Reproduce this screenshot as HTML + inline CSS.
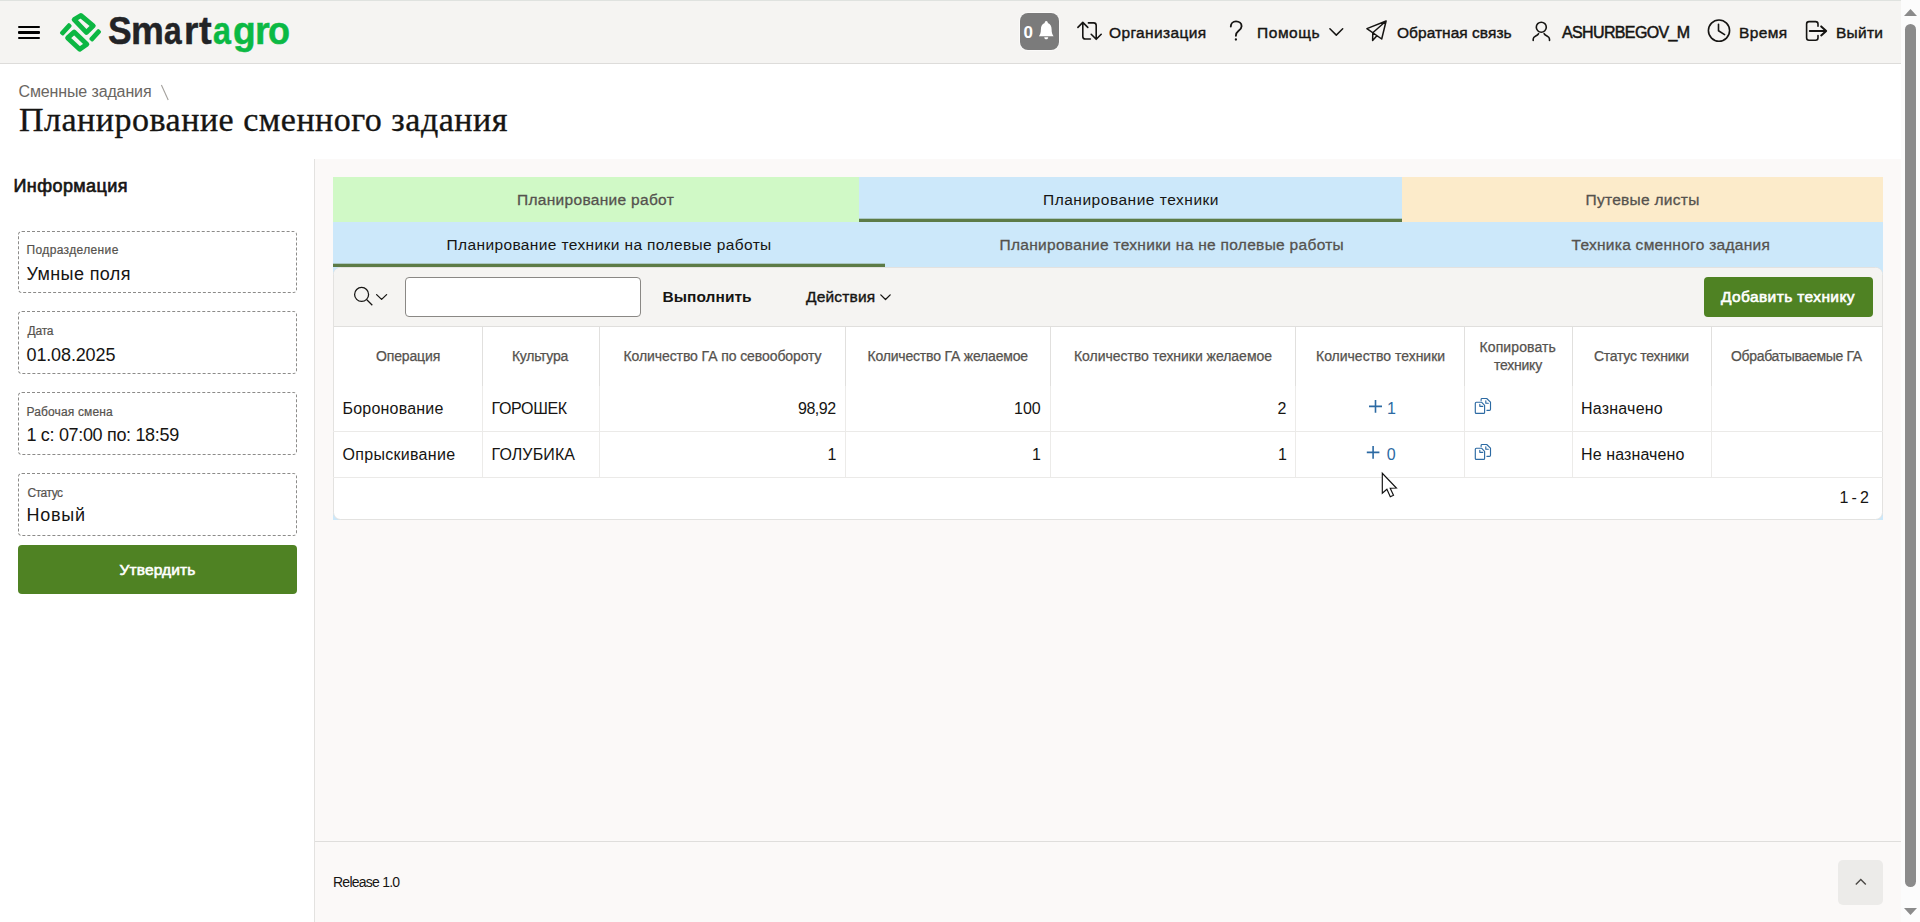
<!DOCTYPE html>
<html lang="ru">
<head>
<meta charset="utf-8">
<title>Планирование сменного задания</title>
<style>
*{box-sizing:border-box;margin:0;padding:0}
html,body{width:1920px;height:922px;overflow:hidden;background:#fff}
body{font-family:"Liberation Sans",sans-serif;color:#161513;font-size:16px;position:relative}
.abs{position:absolute}
.t{position:absolute;white-space:nowrap;line-height:1;color:#161513}
#topline{left:0;top:0;width:1920px;height:1px;background:#dfe2df}
#hdr{left:0;top:1px;width:1901px;height:62px;background:#f5f4f2}
#hdrline{left:0;top:63px;width:1901px;height:1px;background:#dddcda}
.bar{position:absolute;left:18px;width:22px;height:2px;background:#000;border-radius:1px}
.nav{color:#161513;-webkit-text-stroke:0.4px #161513}
#badge{left:1020px;top:13px;width:39px;height:37px;border-radius:8px;background:#7b7b7b;box-shadow:0 0 0 1px rgba(255,255,255,.55)}
#sb{left:1901px;top:0;width:19px;height:922px;background:#fcfcfc}
#sbthumb{left:1905px;top:24px;width:11px;height:863px;background:#8b8b8b;border-radius:6px}
#sideline{left:314px;top:159px;width:1px;height:763px;background:#e3e2e0}
.fld{position:absolute;left:18px;width:279px;height:62px;border:1px dashed #8c8b89;border-radius:4px;background:#fff}
.fl{color:#55524e;-webkit-text-stroke:0.2px #55524e}
.fv{color:#161513}
.btn{position:absolute;background:#4f8223;border-radius:4px}
#main{left:315px;top:159px;width:1586px;height:763px;background:#fbf9f8}
#footline{left:315px;top:841px;width:1586px;height:1px;background:#dfdedc}
#totop{left:1838px;top:860px;width:45px;height:45px;border-radius:5px;background:#ecebe9}
.ina{color:#55524e;-webkit-text-stroke:0.3px #55524e}
.th{color:#55524e;-webkit-text-stroke:0.25px #55524e}
.td{color:#161513}
.vl{position:absolute;width:1px;background:#ecebe9}
.hl{position:absolute;height:1px;background:#ebeae8}
.lnk{color:#2c6aa3}
.ul{position:absolute;height:3px;background:#5c7b46;box-shadow:0 -1px 0 rgba(92,123,70,.3)}
#irbg{left:333px;top:267px;width:1550px;height:253px;background:#cce8fa}
#ir{left:333px;top:267px;width:1550px;height:253px;border-radius:7.5px;background:#fff;overflow:hidden;border:1px solid #e3e2e0}
#tb{left:-1px;top:-1px;width:1550px;height:60px;background:#f5f4f2}
#tbline{left:-1px;top:58px;width:1550px;height:1px;background:#e0dfdd}
#srch{left:405px;top:277px;width:236px;height:40px;border:1px solid #8a8885;border-radius:4px;background:#fff}
</style>
</head>
<body>
<!-- HEADER -->
<div id="topline" class="abs"></div>
<div id="hdr" class="abs"></div>
<div id="hdrline" class="abs"></div>
<div class="bar" style="top:26px"></div>
<div class="bar" style="top:31px;height:3px"></div>
<div class="bar" style="top:37px"></div>
<svg class="abs" style="left:50px;top:5px" width="60" height="55" viewBox="50 5 60 55">
<g fill="none" stroke="#0cb743" stroke-width="4.9" stroke-linejoin="round">
<path d="M80.8 15.5 L93.27 25.81 L86.35 32.43 L74.15 19.67 Z"/>
<path d="M74.11 32.08 L86.86 44.17 L79.7 49.3 L67.63 37.91 Z"/>
</g>
<rect x="-7" y="-2.4" width="14" height="4.8" rx="1.6" fill="#0cb743" transform="translate(65.8 29.3) rotate(-47.5)"/>
<rect x="-7" y="-2.4" width="14" height="4.8" rx="1.6" fill="#0cb743" transform="translate(95.2 35.3) rotate(-47.5)"/>
</svg>
<div id="badge" class="abs"></div>
<div class="abs" style="left:1023.4px;top:24px;font-size:17px;line-height:17px;font-weight:bold;color:#fff">0</div>
<!-- nav icons -->
<svg class="abs" style="left:1000px;top:0" width="900" height="64" viewBox="1000 0 900 64" fill="none" stroke="#161513" stroke-width="1.6" stroke-linecap="round" stroke-linejoin="round">
<!-- bell -->
<path d="M1046.2 21 C1047.4 21 1047.9 22 1047.8 23.1 C1050.6 24 1051.6 26.6 1051.6 29.2 C1051.6 33 1052.4 34.4 1053.6 36.2 L1038.9 36.2 C1040.1 34.4 1040.9 33 1040.9 29.2 C1040.9 26.6 1041.9 24 1044.7 23.1 C1044.6 22 1045.1 21 1046.2 21 Z" fill="#fff" stroke="none"/>
<path d="M1044.3 37.2 L1048.2 37.2 C1048.2 38.5 1047.3 39.3 1046.2 39.3 C1045.1 39.3 1044.3 38.5 1044.3 37.2 Z" fill="#fff" stroke="none"/>
<!-- swap -->
<path d="M1077.9 27.4 L1082.8 22.4 L1087.8 27.4 M1082.8 22.8 L1082.8 36.4 Q1082.8 39 1085.4 39 L1090.4 39"/>
<path d="M1088.4 22.9 L1093.6 22.9 Q1096.2 22.9 1096.2 25.5 L1096.2 38.8 M1091.2 34.3 L1096.2 39.3 L1101.2 34.3"/>
<!-- question -->
<path stroke-width="1.85" d="M1230.8 26.6 C1230.8 23.4 1233 21.4 1236 21.4 C1239.2 21.4 1241.6 23.4 1241.6 26.2 C1241.6 28.6 1240 29.8 1238.4 31 C1236.8 32.2 1235.9 33.2 1235.9 35.8"/>
<circle cx="1235.9" cy="39.5" r="1.15" fill="#161513" stroke="none"/>
<!-- chevron -->
<path d="M1329.9 28.8 L1336.3 35.1 L1342.7 28.8" stroke-width="1.5"/>
<!-- plane -->
<path d="M1386.1 21 L1366.9 28.6 L1381.7 39 Z M1386.1 21 L1372.8 32.8 L1372.6 40.4 L1376.9 35.7" stroke-width="1.5"/>
<!-- user -->
<circle cx="1541.3" cy="27.2" r="5"/>
<path d="M1533.2 40.4 L1533.2 39 C1533.2 36 1537.2 36.4 1538.6 33.6 M1549.5 40.4 L1549.5 39 C1549.5 36 1545.5 36.4 1544.1 33.6" />
<!-- clock -->
<circle cx="1719" cy="30.6" r="10.6"/>
<path d="M1718.5 24.2 L1718.5 30.8 L1724.6 34.6"/>
<!-- exit -->
<path d="M1818 26.2 L1818 24 Q1818 21.6 1815.6 21.6 L1809 21.6 Q1806.6 21.6 1806.6 24 L1806.6 37.8 Q1806.6 40.2 1809 40.2 L1815.6 40.2 Q1818 40.2 1818 37.8 L1818 35.5"/>
<path d="M1809.8 30.9 L1825.8 30.9 M1821.2 26.4 L1826.2 30.9 L1821.2 35.4" stroke-width="2"/>
</svg>
<!-- SCROLLBAR -->
<div id="sb" class="abs"></div>
<div id="sbthumb" class="abs"></div>
<svg class="abs" style="left:1904px;top:9px" width="13" height="7" viewBox="0 0 13 7"><path d="M6.5 0 L13 7 L0 7 Z" fill="#8b8b8b"/></svg>
<svg class="abs" style="left:1904px;top:908px" width="13" height="7" viewBox="0 0 13 7"><path d="M0 0 L13 0 L6.5 7 Z" fill="#8b8b8b"/></svg>
<!-- SIDEBAR -->
<div class="fld" style="top:231px"></div>
<div class="fld" style="top:311px;height:63px"></div>
<div class="fld" style="top:392px;height:63px"></div>
<div class="fld" style="top:473px;height:63px"></div>
<div class="btn" style="left:18px;top:545px;width:279px;height:49px"></div>
<!-- MAIN -->
<div id="main" class="abs"></div>
<div id="sideline" class="abs"></div>
<div id="footline" class="abs"></div>
<div id="totop" class="abs"></div>
<svg class="abs" style="left:1838px;top:860px" width="45" height="45" viewBox="0 0 45 45" fill="none" stroke="#4a4845" stroke-width="1.4"><path d="M17.8 24.6 L22.8 19.6 L27.8 24.6"/></svg>
<!-- tabs -->
<div class="abs" style="left:333px;top:177px;width:526px;height:45px;background:#d0f9c6"></div>
<div class="abs" style="left:859px;top:177px;width:543px;height:45px;background:#cce8fa"></div>
<div class="abs" style="left:1402px;top:177px;width:481px;height:45px;background:#fcebca"></div>
<div class="ul" style="left:859px;top:219px;width:543px"></div>
<div class="abs" style="left:333px;top:222px;width:1550px;height:45px;background:#cce8fa"></div>
<div class="ul" style="left:333px;top:264px;width:552px"></div>
<!-- IR -->
<div id="irbg" class="abs"></div>
<div id="ir" class="abs">
 <div id="tb" class="abs"></div>
 <div id="tbline" class="abs"></div>
</div>
<div id="srch" class="abs"></div>
<div class="btn" style="left:1704px;top:277px;width:169px;height:40px"></div>
<!-- table lines -->
<div class="vl" style="left:482px;top:327px;height:59px;background:#e1e0de"></div>
<div class="vl" style="left:482px;top:386px;height:92px"></div>
<div class="vl" style="left:599px;top:327px;height:59px;background:#e1e0de"></div>
<div class="vl" style="left:599px;top:386px;height:92px"></div>
<div class="vl" style="left:845px;top:327px;height:59px;background:#e1e0de"></div>
<div class="vl" style="left:845px;top:386px;height:92px"></div>
<div class="vl" style="left:1050px;top:327px;height:59px;background:#e1e0de"></div>
<div class="vl" style="left:1050px;top:386px;height:92px"></div>
<div class="vl" style="left:1295px;top:327px;height:59px;background:#e1e0de"></div>
<div class="vl" style="left:1295px;top:386px;height:92px"></div>
<div class="vl" style="left:1464px;top:327px;height:59px;background:#e1e0de"></div>
<div class="vl" style="left:1464px;top:386px;height:92px"></div>
<div class="vl" style="left:1572px;top:327px;height:59px;background:#e1e0de"></div>
<div class="vl" style="left:1572px;top:386px;height:92px"></div>
<div class="vl" style="left:1711px;top:327px;height:59px;background:#e1e0de"></div>
<div class="vl" style="left:1711px;top:386px;height:92px"></div>
<div class="hl" style="left:333px;top:431px;width:1550px"></div>
<div class="hl" style="left:333px;top:477px;width:1550px"></div>
<!-- toolbar + table icons -->
<svg class="abs" style="left:333px;top:267px" width="1550" height="252" viewBox="333 267 1550 252" fill="none" stroke="#161513" stroke-width="1.4" stroke-linecap="round" stroke-linejoin="round">
<g stroke-width="1.25" stroke-linecap="butt"><circle cx="361.6" cy="294.4" r="7"/><path d="M366.8 299.8 L372.3 305.3"/></g>
<path d="M376.6 294.6 L381.6 299.4 L386.6 294.6" stroke-width="1.3"/>
<path d="M880.8 294.9 L885.5 299.5 L890.2 294.9" stroke-width="1.3"/>
<g stroke="#2c6aa3" stroke-width="1.6" stroke-linecap="butt">
<path d="M1369 406.4 L1382 406.4 M1375.5 400 L1375.5 412.8"/>
<path d="M1366.8 452.4 L1379.4 452.4 M1373.1 446 L1373.1 458.8"/>
</g>
<g stroke="#2c6aa3" stroke-width="1.15">
<path d="M1476.3 402.2 L1481.5 402.2 L1484.6 405.3 L1484.6 412.4 Q1484.6 413.4 1483.6 413.4 L1476.3 413.4 Q1475.3 413.4 1475.3 412.4 L1475.3 403.2 Q1475.3 402.2 1476.3 402.2 Z M1479.8 404.3 L1479.8 406.3 L1482.8 406.3"/>
<path d="M1481.1 400.6 L1481.1 399.4 Q1481.1 398.5 1482 398.5 L1486.7 398.5 L1490.5 402.1 L1490.5 409.2 Q1490.5 410.3 1489.4 410.3 L1486.9 410.3 M1485.8 400.8 L1485.8 403.2 L1488.3 403.2"/>
</g>
<g stroke="#2c6aa3" stroke-width="1.15" transform="translate(0 46)">
<path d="M1476.3 402.2 L1481.5 402.2 L1484.6 405.3 L1484.6 412.4 Q1484.6 413.4 1483.6 413.4 L1476.3 413.4 Q1475.3 413.4 1475.3 412.4 L1475.3 403.2 Q1475.3 402.2 1476.3 402.2 Z M1479.8 404.3 L1479.8 406.3 L1482.8 406.3"/>
<path d="M1481.1 400.6 L1481.1 399.4 Q1481.1 398.5 1482 398.5 L1486.7 398.5 L1490.5 402.1 L1490.5 409.2 Q1490.5 410.3 1489.4 410.3 L1486.9 410.3 M1485.8 400.8 L1485.8 403.2 L1488.3 403.2"/>
</g>
</svg>
<!-- cursor -->
<svg class="abs" style="left:1375px;top:468px" width="30" height="36" viewBox="1375 468 30 36"><path d="M1382.3 473.3 L1382.3 493.2 L1386.9 489.2 L1390.3 496.7 L1393.5 495.3 L1390.2 488.2 L1396.4 488 Z" fill="#fff" stroke="#111" stroke-width="1.15" stroke-linejoin="miter"/></svg>
<svg class="abs" style="left:158px;top:82px" width="14" height="22" viewBox="158 82 14 22"><path d="M161.4 85 L168.2 100" stroke="#a3a09c" stroke-width="1.1" fill="none"/></svg>
<div class="t nav" id="n1" style="left:1109.00px;top:24px;line-height:17px;font-size:15.5px;letter-spacing:0.360px;">Организация</div>
<div class="t nav" id="n2" style="left:1257.00px;top:24px;line-height:17px;font-size:15.5px;letter-spacing:0.560px;">Помощь</div>
<div class="t nav" id="n3" style="left:1397.00px;top:24px;line-height:17px;font-size:15.5px;letter-spacing:0.031px;">Обратная связь</div>
<div class="t" id="n4" style="left:1562.00px;top:24px;line-height:17px;font-size:16px;letter-spacing:-0.636px;color:#161513;-webkit-text-stroke:0.5px #161513">ASHURBEGOV_M</div>
<div class="t nav" id="n5" style="left:1739.00px;top:24px;line-height:17px;font-size:15.5px;letter-spacing:0.400px;">Время</div>
<div class="t nav" id="n6" style="left:1836.00px;top:24px;line-height:17px;font-size:15.5px;letter-spacing:0.250px;">Выйти</div>
<div class="t" id="b1" style="left:18.50px;top:83px;line-height:17px;font-size:16px;letter-spacing:-0.129px;color:#6a6662">Сменные задания</div>
<div class="t" id="ttl" style="left:19.00px;top:101px;line-height:37px;font-size:34px;letter-spacing:0.500px;font-family:'Liberation Serif',serif;color:#161513;-webkit-text-stroke:0.35px #161513">Планирование сменного задания</div>
<div class="t" id="s0" style="left:13.50px;top:176px;line-height:20px;font-size:18px;letter-spacing:0.422px;color:#161513;-webkit-text-stroke:0.65px #161513">Информация</div>
<div class="t fl" id="l1" style="left:26.50px;top:243px;line-height:14px;font-size:12px;letter-spacing:0.367px;">Подразделение</div>
<div class="t fv" id="v1" style="left:26.50px;top:264px;line-height:20px;font-size:18px;letter-spacing:0.378px;">Умные поля</div>
<div class="t fl" id="l2" style="left:27.50px;top:324px;line-height:14px;font-size:12px;letter-spacing:-0.200px;">Дата</div>
<div class="t fv" id="v2" style="left:26.50px;top:345px;line-height:20px;font-size:18px;letter-spacing:-0.133px;">01.08.2025</div>
<div class="t fl" id="l3" style="left:26.50px;top:405px;line-height:14px;font-size:12px;letter-spacing:0.133px;">Рабочая смена</div>
<div class="t fv" id="v3" style="left:26.50px;top:425px;line-height:20px;font-size:18px;letter-spacing:-0.326px;">1 с: 07:00 по: 18:59</div>
<div class="t fl" id="l4" style="left:27.50px;top:486px;line-height:14px;font-size:12px;letter-spacing:-0.480px;">Статус</div>
<div class="t fv" id="v4" style="left:26.50px;top:505px;line-height:20px;font-size:18px;letter-spacing:0.750px;">Новый</div>
<div class="t" id="sb1" style="left:119.50px;top:561px;line-height:17px;font-size:15.5px;letter-spacing:0.125px;color:#fff;-webkit-text-stroke:0.6px #fff">Утвердить</div>
<div class="t ina" id="t1" style="left:517.00px;top:191px;line-height:17px;font-size:15.5px;letter-spacing:0.306px;">Планирование работ</div>
<div class="t" id="t2" style="left:1043.00px;top:191px;line-height:17px;font-size:15.5px;letter-spacing:0.516px;color:#161513">Планирование техники</div>
<div class="t ina" id="t3" style="left:1585.50px;top:191px;line-height:17px;font-size:15.5px;letter-spacing:0.283px;">Путевые листы</div>
<div class="t" id="u1" style="left:446.50px;top:236px;line-height:17px;font-size:15.5px;letter-spacing:0.378px;color:#161513">Планирование техники на полевые работы</div>
<div class="t ina" id="u2" style="left:999.50px;top:236px;line-height:17px;font-size:15.5px;letter-spacing:0.300px;">Планирование техники на не полевые работы</div>
<div class="t ina" id="u3" style="left:1571.50px;top:236px;line-height:17px;font-size:15.5px;letter-spacing:0.278px;">Техника сменного задания</div>
<div class="t" id="g1" style="left:662.50px;top:288px;line-height:17px;font-size:15.5px;letter-spacing:0.050px;font-weight:bold;color:#161513">Выполнить</div>
<div class="t nav" id="g2" style="left:806.00px;top:288px;line-height:17px;font-size:15.5px;letter-spacing:0.171px;">Действия</div>
<div class="t" id="g3" style="left:1721.00px;top:288px;line-height:17px;font-size:15.5px;letter-spacing:0.387px;color:#fff;-webkit-text-stroke:0.6px #fff">Добавить технику</div>
<div class="t th" id="h1" style="left:376.00px;top:348px;line-height:16px;font-size:14px;letter-spacing:-0.143px;">Операция</div>
<div class="t th" id="h2" style="left:512.00px;top:348px;line-height:16px;font-size:14px;letter-spacing:-0.286px;">Культура</div>
<div class="t th" id="h3" style="left:623.50px;top:348px;line-height:16px;font-size:14px;letter-spacing:-0.089px;">Количество ГА по севообороту</div>
<div class="t th" id="h4" style="left:867.50px;top:348px;line-height:16px;font-size:14px;letter-spacing:-0.190px;">Количество ГА желаемое</div>
<div class="t th" id="h5" style="left:1074.00px;top:348px;line-height:16px;font-size:14px;letter-spacing:-0.031px;">Количество техники желаемое</div>
<div class="t th" id="h6" style="left:1316.00px;top:348px;line-height:16px;font-size:14px;letter-spacing:-0.012px;">Количество техники</div>
<div class="t th" id="h7a" style="left:1479.50px;top:339px;line-height:16px;font-size:14px;letter-spacing:0.111px;">Копировать</div>
<div class="t th" id="h7b" style="left:1494.00px;top:357px;line-height:16px;font-size:14px;letter-spacing:-0.233px;">технику</div>
<div class="t th" id="h8" style="left:1594.00px;top:348px;line-height:16px;font-size:14px;letter-spacing:-0.262px;">Статус техники</div>
<div class="t th" id="h9" style="left:1731.00px;top:348px;line-height:16px;font-size:14px;letter-spacing:-0.325px;">Обрабатываемые ГА</div>
<div class="t td" id="r1a" style="left:342.50px;top:400px;line-height:17px;font-size:16px;letter-spacing:0.200px;">Боронование</div>
<div class="t td" id="r1b" style="left:491.50px;top:400px;line-height:17px;font-size:16px;letter-spacing:-0.333px;">ГОРОШЕК</div>
<div class="t td" id="r1c" style="left:798.00px;top:400px;line-height:17px;font-size:16px;letter-spacing:-0.500px;">98,92</div>
<div class="t td" id="r1d" style="left:1014.00px;top:400px;line-height:17px;font-size:16px;">100</div>
<div class="t td" id="r1e" style="left:1277.60px;top:400px;line-height:17px;font-size:16px;">2</div>
<div class="t td lnk" id="r1f" style="left:1387.00px;top:400px;line-height:17px;font-size:16px;">1</div>
<div class="t td" id="r1g" style="left:1581.00px;top:400px;line-height:17px;font-size:16px;letter-spacing:0.225px;">Назначено</div>
<div class="t td" id="r2a" style="left:342.50px;top:446px;line-height:17px;font-size:16px;letter-spacing:0.291px;">Опрыскивание</div>
<div class="t td" id="r2b" style="left:491.50px;top:446px;line-height:17px;font-size:16px;letter-spacing:0.114px;">ГОЛУБИКА</div>
<div class="t td" id="r2c" style="left:827.50px;top:446px;line-height:17px;font-size:16px;">1</div>
<div class="t td" id="r2d" style="left:1032.00px;top:446px;line-height:17px;font-size:16px;">1</div>
<div class="t td" id="r2e" style="left:1278.00px;top:446px;line-height:17px;font-size:16px;">1</div>
<div class="t td lnk" id="r2f" style="left:1386.85px;top:446px;line-height:17px;font-size:16px;">0</div>
<div class="t td" id="r2g" style="left:1581.00px;top:446px;line-height:17px;font-size:16px;letter-spacing:0.109px;">Не назначено</div>
<div class="t td" id="pg" style="left:1839.50px;top:489px;line-height:17px;font-size:16px;letter-spacing:-0.650px;">1 - 2</div>
<div class="t" id="ft" style="left:333.00px;top:874px;line-height:16px;font-size:14px;letter-spacing:-0.760px;color:#161513">Release 1.0</div>
<div class="t" id="lg0" style="left:107.50px;top:8px;line-height:44px;font-size:39.4px;font-weight:bold;color:#222326;-webkit-text-stroke:0.5px #222326;transform-origin:0 0;transform:scaleX(0.9000)">S</div>
<div class="t" id="lg1" style="left:131.02px;top:8px;line-height:44px;font-size:39.4px;font-weight:bold;color:#222326;-webkit-text-stroke:0.5px #222326;transform-origin:0 0;transform:scaleX(0.9387)">m</div>
<div class="t" id="lg2" style="left:164.10px;top:8px;line-height:44px;font-size:39.4px;font-weight:bold;color:#222326;-webkit-text-stroke:0.5px #222326;transform-origin:0 0;transform:scaleX(0.8045)">a</div>
<div class="t" id="lg3" style="left:183.62px;top:8px;line-height:44px;font-size:39.4px;font-weight:bold;color:#222326;-webkit-text-stroke:0.5px #222326;transform-origin:0 0;transform:scaleX(0.9385)">r</div>
<div class="t" id="lg4" style="left:199.40px;top:8px;line-height:44px;font-size:39.4px;font-weight:bold;color:#222326;-webkit-text-stroke:0.5px #222326;transform-origin:0 0;transform:scaleX(0.9615)">t</div>
<div class="t" id="lg5" style="left:213.18px;top:8px;line-height:44px;font-size:39.4px;font-weight:bold;color:#0bb944;-webkit-text-stroke:0.5px #0bb944;transform-origin:0 0;transform:scaleX(0.8182)">a</div>
<div class="t" id="lg6" style="left:233.16px;top:8px;line-height:44px;font-size:39.4px;font-weight:bold;color:#0bb944;-webkit-text-stroke:0.5px #0bb944;transform-origin:0 0;transform:scaleX(0.9429)">g</div>
<div class="t" id="lg7" style="left:254.58px;top:8px;line-height:44px;font-size:39.4px;font-weight:bold;color:#0bb944;-webkit-text-stroke:0.5px #0bb944;transform-origin:0 0;transform:scaleX(0.9615)">r</div>
<div class="t" id="lg8" style="left:268.29px;top:8px;line-height:44px;font-size:39.4px;font-weight:bold;color:#0bb944;-webkit-text-stroke:0.5px #0bb944;transform-origin:0 0;transform:scaleX(0.9136)">o</div>
</body>
</html>
